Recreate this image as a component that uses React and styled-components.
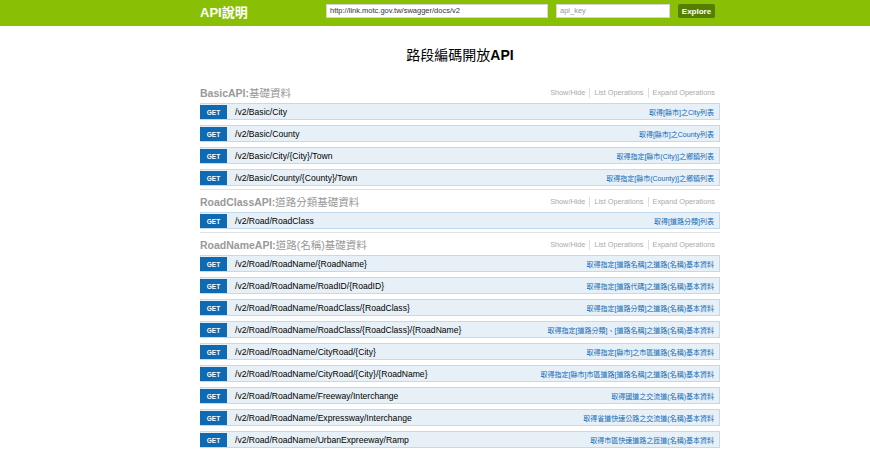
import React from "react";
import styled, { createGlobalStyle } from "styled-components";

const GlobalStyle = createGlobalStyle`
  html, body {
    margin: 0;
    padding: 0;
    background: #fff;
    font-family: "Liberation Sans", Arial, "Noto Sans CJK TC", sans-serif;
  }
`;

const sections = [
  {
    name: "BasicAPI:",
    zh: "基礎資料",
    ops: [
      ["/v2/Basic/City", "取得[縣市]之City列表"],
      ["/v2/Basic/County", "取得[縣市]之County列表"],
      ["/v2/Basic/City/{City}/Town", "取得指定[縣市(City)]之鄉鎮列表"],
      ["/v2/Basic/County/{County}/Town", "取得指定[縣市(County)]之鄉鎮列表"],
    ],
  },
  {
    name: "RoadClassAPI:",
    zh: "道路分類基礎資料",
    ops: [["/v2/Road/RoadClass", "取得[道路分類]列表"]],
  },
  {
    name: "RoadNameAPI:",
    zh: "道路(名稱)基礎資料",
    ops: [
      ["/v2/Road/RoadName/{RoadName}", "取得指定[道路名稱]之道路(名稱)基本資料"],
      ["/v2/Road/RoadName/RoadID/{RoadID}", "取得指定[道路代碼]之道路(名稱)基本資料"],
      ["/v2/Road/RoadName/RoadClass/{RoadClass}", "取得指定[道路分類]之道路(名稱)基本資料"],
      [
        "/v2/Road/RoadName/RoadClass/{RoadClass}/{RoadName}",
        "取得指定[道路分類]、[道路名稱]之道路(名稱)基本資料",
      ],
      ["/v2/Road/RoadName/CityRoad/{City}", "取得指定[縣市]之市區道路(名稱)基本資料"],
      [
        "/v2/Road/RoadName/CityRoad/{City}/{RoadName}",
        "取得指定[縣市]市區道路[道路名稱]之道路(名稱)基本資料",
      ],
      ["/v2/Road/RoadName/Freeway/Interchange", "取得國道之交流道(名稱)基本資料"],
      ["/v2/Road/RoadName/Expressway/Interchange", "取得省道快速公路之交流道(名稱)基本資料"],
      ["/v2/Road/RoadName/UrbanExpreeway/Ramp", "取得市區快速道路之匝道(名稱)基本資料"],
    ],
  },
];

const Header = styled.header`
  background: #89bf04;
  height: 26px;
`;

const HeaderInner = styled.div`
  width: 520px;
  margin-left: 200px;
  height: 100%;
  padding-right: 5px;
  box-sizing: border-box;
  display: flex;
  align-items: center;
  justify-content: space-between;
`;

const Logo = styled.div`
  color: #fff;
  font-size: 13px;
  font-weight: bold;
  margin-top: -4px;
  span {
    font-weight: 600;
  }
`;

const Form = styled.div`
  display: flex;
  align-items: center;
  gap: 8px;
  margin-top: -4px;
`;

const Input = styled.div`
  width: ${(p) => p.$w}px;
  height: 14px;
  box-sizing: border-box;
  background: #fff;
  border: 1px solid #d6d6d6;
  font-size: 7.5px;
  line-height: 12px;
  padding-left: 3px;
  color: ${(p) => (p.$placeholder ? "#999" : "#333")};
`;

const Button = styled.div`
  width: 37px;
  height: 14px;
  background: #547f00;
  border-radius: 2px;
  color: #fff;
  font-weight: bold;
  font-size: 8px;
  display: flex;
  align-items: center;
  justify-content: center;
`;

const Main = styled.main`
  width: 520px;
  margin-left: 200px;
  padding-top: 19px;
`;

const Title = styled.h1`
  margin: 0 0 16px;
  text-align: center;
  font-size: 14px;
  line-height: 20px;
  color: #000;
  font-weight: bold;
  span {
    font-weight: normal;
  }
`;

const Section = styled.section`
  border-bottom: 1px solid #e2e2e2;
  padding-bottom: 3px;
`;

const SectionHead = styled.div`
  height: 22px;
  display: flex;
  align-items: center;
  justify-content: space-between;
`;

const SectionTitle = styled.h2`
  margin: 0;
  font-size: 10.5px;
  color: #999;
  font-weight: bold;
  span {
    font-weight: normal;
  }
`;

const Links = styled.ul`
  display: flex;
  list-style: none;
  margin: 2px 0 0;
  padding: 0 5px 0 0;
  font-size: 7.3px;
  color: #aaa;
  li {
    padding: 0 4px;
    border-right: 1px solid #ddd;
    line-height: 10px;
  }
  li:last-child {
    border-right: none;
    padding-right: 0;
  }
`;

const Ops = styled.div`
  display: flex;
  flex-direction: column;
  gap: 5px;
`;

const Row = styled.div`
  height: 17px;
  box-sizing: border-box;
  background: #e7f0f7;
  border: 1px solid #c3d9ec;
  display: flex;
  align-items: center;
`;

const Method = styled.span`
  width: 27px;
  height: 14px;
  margin-left: -1px;
  margin-top: 1px;
  background: #0f6ab4;
  color: #fff;
  font-size: 6.5px;
  font-weight: bold;
  display: flex;
  align-items: center;
  justify-content: center;
  flex-shrink: 0;
`;

const Path = styled.span`
  margin-left: 8px;
  font-size: 8.6px;
  color: #000;
  flex: 1;
  white-space: nowrap;
`;

const Desc = styled.span`
  font-size: 7px;
  color: #0f6ab4;
  padding-right: 5px;
  white-space: nowrap;
`;

export default function App() {
  return (
    <>
      <GlobalStyle />
      <Header>
        <HeaderInner>
          <Logo>
            API<span>說明</span>
          </Logo>
          <Form>
            <Input $w={222}>http://link.motc.gov.tw/swagger/docs/v2</Input>
            <Input $w={114} $placeholder>
              api_key
            </Input>
            <Button>Explore</Button>
          </Form>
        </HeaderInner>
      </Header>
      <Main>
        <Title>
          <span>路段編碼開放</span>API
        </Title>
        {sections.map((s) => (
          <Section key={s.name}>
            <SectionHead>
              <SectionTitle>
                {s.name}
                <span>{s.zh}</span>
              </SectionTitle>
              <Links>
                <li>Show/Hide</li>
                <li>List Operations</li>
                <li>Expand Operations</li>
              </Links>
            </SectionHead>
            <Ops>
              {s.ops.map(([path, desc]) => (
                <Row key={path}>
                  <Method>GET</Method>
                  <Path>{path}</Path>
                  <Desc>{desc}</Desc>
                </Row>
              ))}
            </Ops>
          </Section>
        ))}
      </Main>
    </>
  );
}
